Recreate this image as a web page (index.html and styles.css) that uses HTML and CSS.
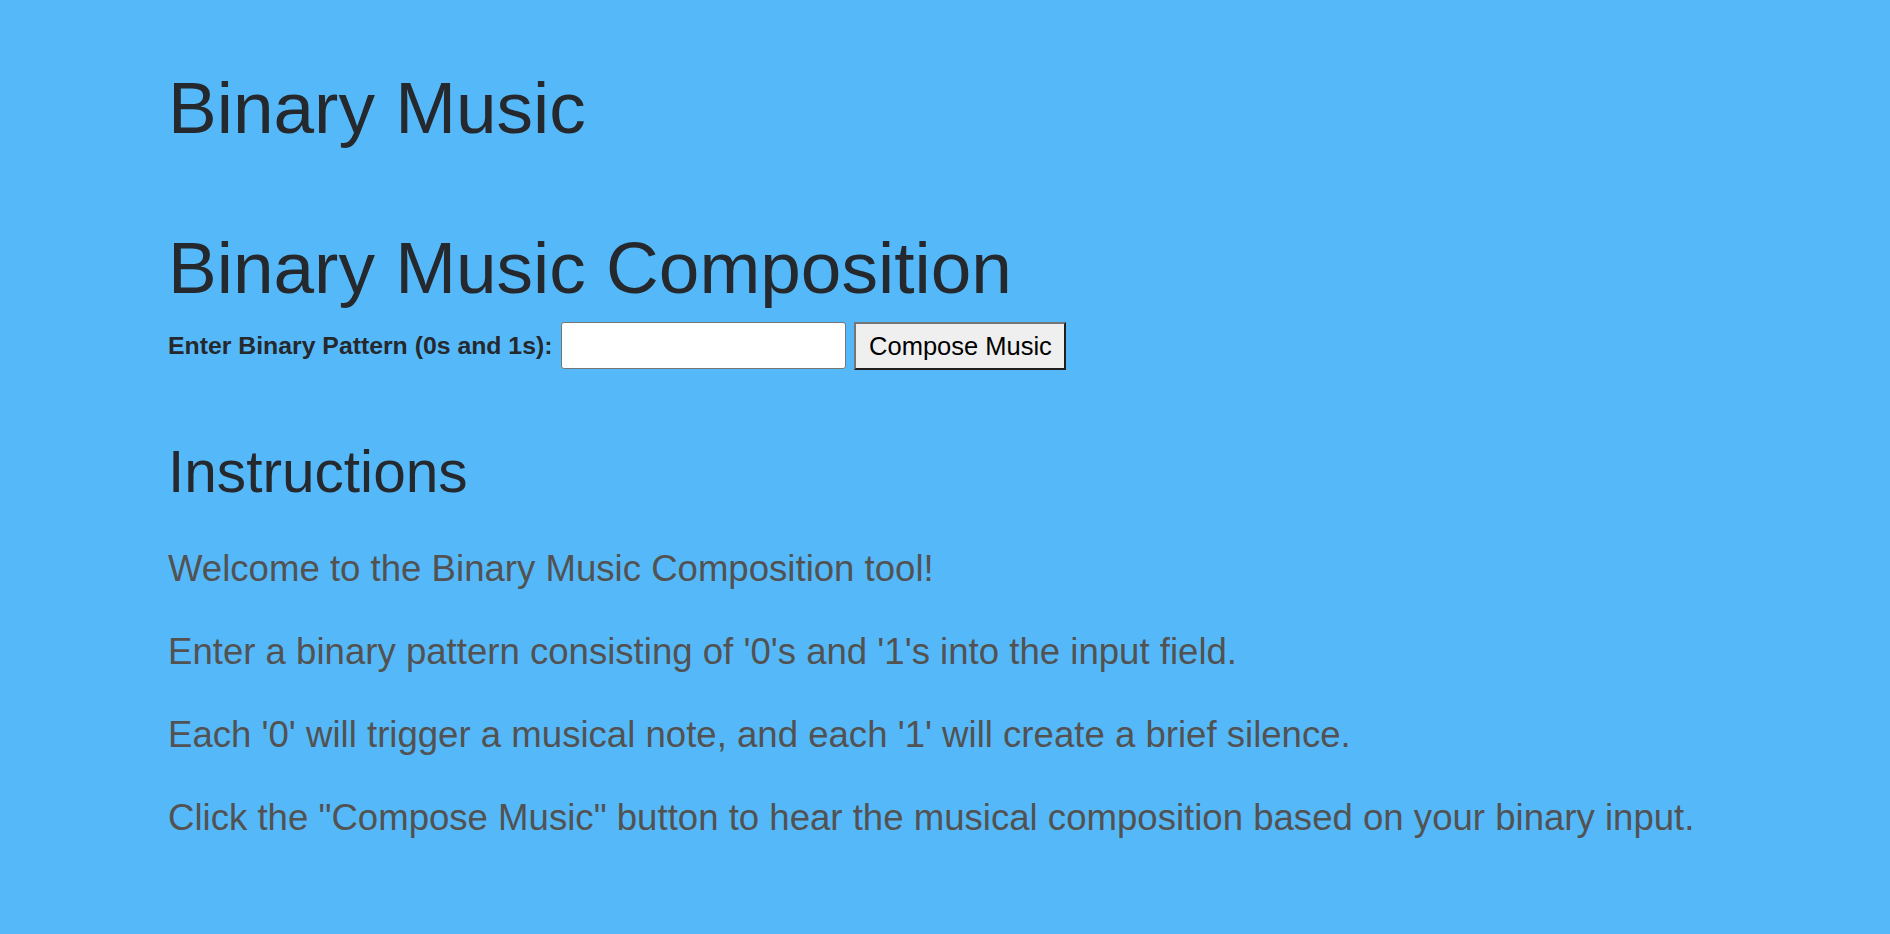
FILE: index.html
```html
<!DOCTYPE html>
<html lang="en">
<head>
<meta charset="utf-8">
<title>Binary Music</title>
<link rel="stylesheet" href="styles.css">
</head>
<body>
<main class="page">
  <h1 class="site-title">Binary Music</h1>
  <h1 class="section-title">Binary Music Composition</h1>
  <div class="compose-row">
    <label class="field-label" for="pattern">Enter Binary Pattern (0s and 1s):</label>
    <input class="field-input" type="text" id="pattern">
    <button class="compose-btn" type="button">Compose Music</button>
  </div>
  <h2 class="instr-title">Instructions</h2>
  <p class="instr-text">Welcome to the Binary Music Composition tool!</p>
  <p class="instr-text">Enter a binary pattern consisting of '0's and '1's into the input field.</p>
  <p class="instr-text">Each '0' will trigger a musical note, and each '1' will create a brief silence.</p>
  <p class="instr-text">Click the "Compose Music" button to hear the musical composition based on your binary input.</p>
</main>
</body>
</html>
```

FILE: styles.css
```css
html, body {
  margin: 0;
  padding: 0;
  background: #55b9f9;
}
body {
  font-family: "Liberation Sans", Arial, Helvetica, sans-serif;
  color: #25282c;
  min-height: 934px;
}
.page {
  padding: 64px 166px 0 168px;
}
.site-title,
.section-title {
  margin: 0;
  font-size: 73px;
  line-height: 88px;
  font-weight: 400;
  color: #25282c;
}
.section-title {
  margin-top: 72px;
}
.compose-row {
  display: flex;
  align-items: flex-start;
  margin-top: 10px;
  height: 48px;
}
.field-label {
  font-size: 24.8px;
  font-weight: 700;
  line-height: 48px;
  color: #25282c;
  margin-right: 9px;
}
.field-input {
  box-sizing: border-box;
  width: 285px;
  height: 47px;
  margin: 0;
  border: 1px solid #767676;
  border-radius: 3px;
  background: #fff;
  padding: 2px 6px;
  font-family: inherit;
  font-size: 25px;
}
.compose-btn {
  box-sizing: border-box;
  margin: 0 0 0 8px;
  height: 48px;
  width: 212px;
  padding: 0 10px;
  background: #efefef;
  color: #000;
  font-family: inherit;
  font-size: 25.5px;
  line-height: 44px;
  border: 2px solid;
  border-color: #767676 #1f1f1f #1f1f1f #767676;
  border-radius: 0;
}
.instr-title {
  margin: 67px 0 0 0;
  font-size: 58.6px;
  line-height: 70px;
  font-weight: 400;
  color: #25282c;
}
.instr-text {
  margin: 39px 0 0 0;
  font-size: 36.6px;
  line-height: 44px;
  color: #525252;
}
.instr-title + .instr-text {
  margin-top: 40px;
}
```
